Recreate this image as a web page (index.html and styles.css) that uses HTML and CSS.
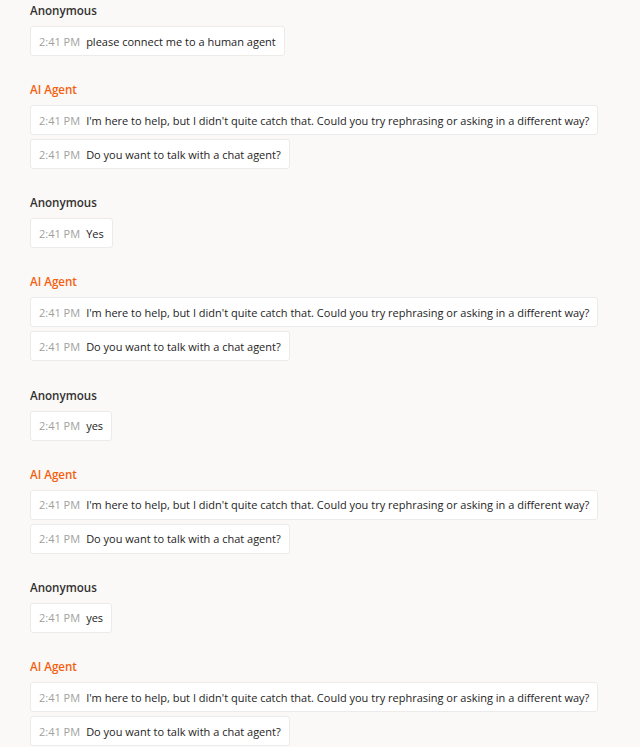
FILE: index.html
```html
<!DOCTYPE html>
<html>
<head>
<meta charset="utf-8">
<link rel="stylesheet" href="styles.css">
</head>
<body>
<div class="transcript">
  <div class="group">
    <div class="name">Anonymous</div>
    <div class="msgs">
      <div class="bubble"><span class="time">2:41 PM</span><span class="text">please connect me to a human agent</span></div>
    </div>
  </div>
  <div class="group">
    <div class="name bot">AI Agent</div>
    <div class="msgs">
      <div class="bubble"><span class="time">2:41 PM</span><span class="text">I'm here to help, but I didn't quite catch that. Could you try rephrasing or asking in a different way?</span></div>
      <div class="bubble"><span class="time">2:41 PM</span><span class="text">Do you want to talk with a chat agent?</span></div>
    </div>
  </div>
  <div class="group">
    <div class="name">Anonymous</div>
    <div class="msgs">
      <div class="bubble"><span class="time">2:41 PM</span><span class="text">Yes</span></div>
    </div>
  </div>
  <div class="group">
    <div class="name bot">AI Agent</div>
    <div class="msgs">
      <div class="bubble"><span class="time">2:41 PM</span><span class="text">I'm here to help, but I didn't quite catch that. Could you try rephrasing or asking in a different way?</span></div>
      <div class="bubble"><span class="time">2:41 PM</span><span class="text">Do you want to talk with a chat agent?</span></div>
    </div>
  </div>
  <div class="group">
    <div class="name">Anonymous</div>
    <div class="msgs">
      <div class="bubble"><span class="time">2:41 PM</span><span class="text">yes</span></div>
    </div>
  </div>
  <div class="group">
    <div class="name bot">AI Agent</div>
    <div class="msgs">
      <div class="bubble"><span class="time">2:41 PM</span><span class="text">I'm here to help, but I didn't quite catch that. Could you try rephrasing or asking in a different way?</span></div>
      <div class="bubble"><span class="time">2:41 PM</span><span class="text">Do you want to talk with a chat agent?</span></div>
    </div>
  </div>
  <div class="group">
    <div class="name">Anonymous</div>
    <div class="msgs">
      <div class="bubble"><span class="time">2:41 PM</span><span class="text">yes</span></div>
    </div>
  </div>
  <div class="group">
    <div class="name bot">AI Agent</div>
    <div class="msgs">
      <div class="bubble"><span class="time">2:41 PM</span><span class="text">I'm here to help, but I didn't quite catch that. Could you try rephrasing or asking in a different way?</span></div>
      <div class="bubble"><span class="time">2:41 PM</span><span class="text">Do you want to talk with a chat agent?</span></div>
    </div>
  </div>
</div>
</body>
</html>
```
FILE: styles.css
```css
html, body {
  margin: 0;
  padding: 0;
  background: #faf9f8;
}
body {
  font-family: "Open Sans", "Noto Sans", sans-serif;
  font-size: 11px;
  color: #252423;
}
.transcript {
  display: flex;
  flex-direction: column;
  gap: 25.17px;
  padding: 2px 30px 0 30px;
}
.group {
  display: flex;
  flex-direction: column;
  gap: 7px;
}
.name {
  font-weight: 600;
  font-size: 11.6px;
  line-height: 17px;
  color: #323130;
}
.name.bot {
  color: #f5600f;
}
.msgs {
  display: flex;
  flex-direction: column;
  align-items: flex-start;
  gap: 4px;
}
.bubble {
  display: flex;
  align-items: center;
  gap: 6px;
  height: 28px;
  padding: 0 8px;
  background: #ffffff;
  border: 1px solid #edebe9;
  border-radius: 3px;
  white-space: nowrap;
}
.time {
  color: #a19f9d;
}
.text {
  color: #252423;
}
```
